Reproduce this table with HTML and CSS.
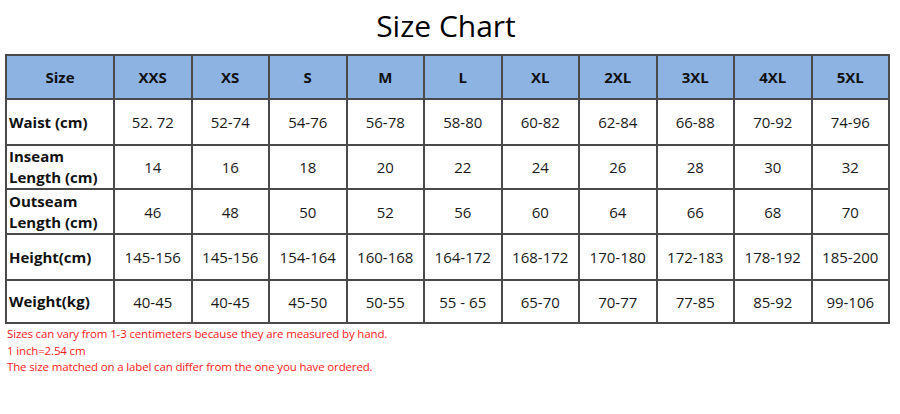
FILE: index.html
```html
<!DOCTYPE html>
<html>
<head>
<meta charset="utf-8">
<link rel="stylesheet" href="styles.css">
</head>
<body>
<div class="page">
  <h1 class="title">Size Chart</h1>
  <table class="chart">
    <thead>
      <tr>
        <th class="label-col">Size</th>
        <th>XXS</th><th>XS</th><th>S</th><th>M</th><th>L</th><th>XL</th><th>2XL</th><th>3XL</th><th>4XL</th><th>5XL</th>
      </tr>
    </thead>
    <tbody>
      <tr class="r1">
        <td class="label">Waist (cm)</td>
        <td>52. 72</td><td>52-74</td><td>54-76</td><td>56-78</td><td>58-80</td><td>60-82</td><td>62-84</td><td>66-88</td><td>70-92</td><td>74-96</td>
      </tr>
      <tr class="r2">
        <td class="label">Inseam<br>Length (cm)</td>
        <td>14</td><td>16</td><td>18</td><td>20</td><td>22</td><td>24</td><td>26</td><td>28</td><td>30</td><td>32</td>
      </tr>
      <tr class="r3">
        <td class="label">Outseam<br>Length (cm)</td>
        <td>46</td><td>48</td><td>50</td><td>52</td><td>56</td><td>60</td><td>64</td><td>66</td><td>68</td><td>70</td>
      </tr>
      <tr class="r4">
        <td class="label">Height(cm)</td>
        <td>145-156</td><td>145-156</td><td>154-164</td><td>160-168</td><td>164-172</td><td>168-172</td><td>170-180</td><td>172-183</td><td>178-192</td><td>185-200</td>
      </tr>
      <tr class="r5">
        <td class="label">Weight(kg)</td>
        <td>40-45</td><td>40-45</td><td>45-50</td><td>50-55</td><td>55 - 65</td><td>65-70</td><td>70-77</td><td>77-85</td><td>85-92</td><td>99-106</td>
      </tr>
    </tbody>
  </table>
  <div class="notes">
    <p>Sizes can vary from 1-3 centimeters because they are measured by hand.</p>
    <p>1 inch=2.54 cm</p>
    <p>The size matched on a label can differ from the one you have ordered.</p>
  </div>
</div>
</body>
</html>
```
FILE: styles.css
```css
html, body {
  margin: 0;
  padding: 0;
  background: #ffffff;
}
.page {
  width: 900px;
  height: 414px;
  font-family: "Open Sans", "Liberation Sans", sans-serif;
  color: #111;
}
.title {
  margin: 0;
  height: 54px;
  line-height: 52px;
  text-align: center;
  font-size: 30px;
  font-weight: 400;
  color: #000;
  padding-right: 8px;
}
.chart {
  margin-left: 5px;
  width: 885px;
  border-collapse: collapse;
  table-layout: fixed;
}
.chart th, .chart td {
  border: 2px solid #4a4a4a;
  text-align: center;
  padding: 0;
}
.chart th {
  background: #8db3e2;
  height: 42px;
  font-size: 15px;
  font-weight: 700;
  color: #111;
}
.chart th.label-col {
  width: 106px;
}
.chart td {
  font-size: 15px;
  color: #1a1a1a;
}
.chart td.label {
  text-align: left;
  padding-left: 2px;
  font-weight: 700;
  line-height: 21px;
  color: #111;
}
.r1 td { height: 44px; }
.r2 td { height: 42px; }
.r3 td { height: 43px; }
.r4 td { height: 44px; }
.r5 td { height: 41px; }
.notes {
  padding-left: 7px;
  padding-top: 2px;
  color: #ff1a1a;
  font-size: 11.5px;
  letter-spacing: -0.15px;
}
.notes p {
  margin: 0;
  line-height: 16.5px;
}
```
